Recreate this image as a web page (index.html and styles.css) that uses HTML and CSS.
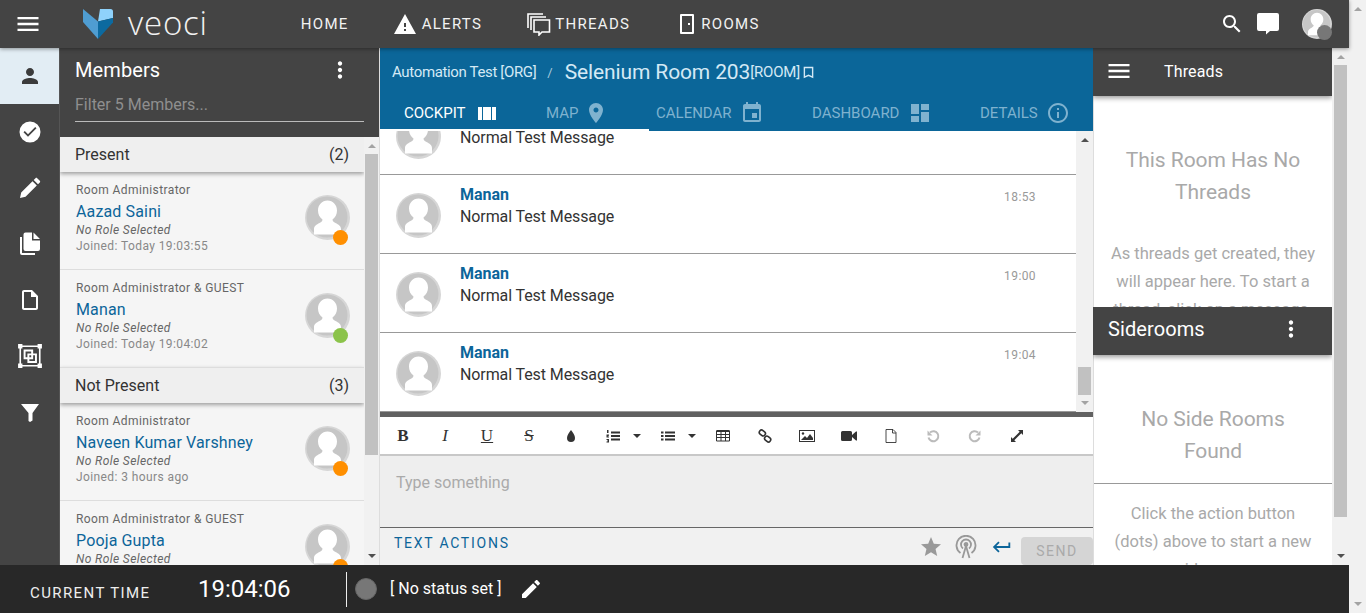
FILE: index.html
```html
<!DOCTYPE html>
<html lang="en">
<head>
  <meta charset="UTF-8" />
  <meta name="viewport" content="width=device-width, initial-scale=1.0" />
  <title>Veoci</title>
  <link rel="stylesheet" href="styles.css">
</head>
<body>
  <svg class="defs" width="0" height="0">
    <symbol id="avatar" viewBox="0 0 45 45">
      <circle cx="22.5" cy="22.5" r="22.5" fill="#d6d6d6"/>
      <circle cx="22" cy="22" r="20.5" fill="#c6c6c6"/>
      <path d="M22.5 5.500c5.500 0 9.500 4.500 9.500 10 0 4-1.700 7-4.500 9 0 1.500 1 2.500 3 3.500 3 1.500 5.500 3 5.500 6v5.500H9V34c0-3 2.500-4.500 5.500-6 2-1 3-2 3-3.500-2.800-2-4.500-5-4.500-9 0-5.500 4-10 9.500-10z" fill="#fff"/>
    </symbol>
    <symbol id="dots" viewBox="0 0 24 24">
      <path d="M12 8c1.100 0 2-.9 2-2s-.9-2-2-2-2 .9-2 2 .9 2 2 2zm0 2c-1.100 0-2 .9-2 2s.9 2 2 2 2-.9 2-2-.9-2-2-2zm0 6c-1.100 0-2 .9-2 2s.9 2 2 2 2-.9 2-2-.9-2-2-2z"/>
    </symbol>
    <symbol id="menu" viewBox="0 0 24 24">
      <path d="M3 18h18v-2H3v2zm0-5h18v-2H3v2zm0-7v2h18V6H3z"/>
    </symbol>
  </svg>

  <div class="app">
    <header class="topbar">
      <svg class="icon burger"><use href="#menu"/></svg>
      <div class="logo">
        <svg width="30" height="30" viewBox="0 0 30 30">
          <path d="M0 0l15 12.500V30L0 13z" fill="#4f9dd2"/>
          <path d="M17 0h10.500Q30 0 30 2.500V9L15 12.500 17 0z" fill="#8fd2fb"/>
          <path d="M15 12.500L30 9v4.500L15 30z" fill="#0c6aa0"/>
        </svg>
        <span class="logo-text">veoci</span>
      </div>
      <nav class="topnav">
        <a class="nav-home">HOME</a>
        <a class="nav-alerts"><svg width="24" height="24" viewBox="0 0 24 24"><path d="M1 22h22L12 2 1 22zm12-3h-2v-2h2v2zm0-4h-2v-4h2v4z"/></svg>ALERTS</a>
        <a class="nav-threads">
          <svg width="25" height="24" viewBox="0 0 25 24" fill="none" stroke="#fff" stroke-width="1.600">
            <path d="M17 2H2v14"/><path d="M20 5H5v13"/>
            <path d="M8 8h15.500v12H16l-3 3v-3H8z" fill="#444"/>
          </svg>THREADS</a>
        <a class="nav-rooms"><svg width="14" height="20" viewBox="0 0 14 20"><path d="M1 0h12a1 1 0 011 1v18a1 1 0 01-1 1H1a1 1 0 01-1-1V1a1 1 0 011-1zm1 2v16h10V2zm6 7h2v2H8z" fill-rule="evenodd"/></svg>ROOMS</a>
      </nav>
      <div class="top-right">
        <svg class="icon search" viewBox="0 0 24 24"><path d="M15.500 14h-.79l-.28-.27C15.410 12.590 16 11.110 16 9.500 16 5.910 13.090 3 9.500 3S3 5.910 3 9.500 5.910 16 9.500 16c1.610 0 3.090-.59 4.230-1.570l.27.280v.79l5 4.990L20.490 19l-4.990-5zm-6 0C7.010 14 5 11.990 5 9.500S7.010 5 9.500 5 14 7.010 14 9.500 11.990 14 9.500 14z"/></svg>
        <svg class="chat" width="22" height="22" viewBox="0 0 22 22"><path d="M2 0h18a2 2 0 012 2v14a2 2 0 01-2 2h-7l-4 3.500V18H2a2 2 0 01-2-2V2a2 2 0 012-2z"/></svg>
        <div class="user-pic">
          <svg width="30" height="30"><use href="#avatar"/></svg>
          <span class="badge badge-me"></span>
        </div>
      </div>
    </header>

    <div class="workspace">
      <aside class="rail">
        <a class="rail-item active"><svg viewBox="0 0 24 24"><path d="M12 12c2.210 0 4-1.790 4-4s-1.790-4-4-4-4 1.790-4 4 1.790 4 4 4zm0 2c-2.670 0-8 1.340-8 4v2h16v-2c0-2.660-5.330-4-8-4z"/></svg></a>
        <a class="rail-item"><svg viewBox="0 0 24 24"><path d="M12 1.500a10.500 10.500 0 100 21 10.500 10.500 0 000-21zm-2 15.300l-4.500-4.500 1.300-1.300 3.200 3.200 7.200-7.200 1.300 1.300z" fill-rule="evenodd"/></svg></a>
        <a class="rail-item"><svg viewBox="0 0 24 24"><path d="M2 22l1.200-5.500L14.500 5.200l4.300 4.300L7.500 20.800zM15.700 4l1.800-1.800c.5-.5 1.200-.5 1.700 0l2.600 2.600c.5.5.5 1.200 0 1.700L20 8.300z"/></svg></a>
        <a class="rail-item"><svg viewBox="0 0 24 24"><path d="M14 .5H7.500a2 2 0 00-2 2V17a2 2 0 002 2H20a2 2 0 002-2V8.500h-8zM15.500.5v6.500H22zM2 5v16a2 2 0 002 2h13v-2H4V5z"/></svg></a>
        <a class="rail-item"><svg viewBox="0 0 24 24"><path d="M14 2H6c-1.100 0-2 .9-2 2v16c0 1.100.9 2 2 2h12c1.100 0 2-.9 2-2V8l-6-6zm4 18H6V4h7v5h5v11z"/></svg></a>
        <a class="rail-item"><svg class="rail-frame" viewBox="0 0 24 24" stroke="#fff" stroke-width="1.800"><path d="M3 3h18v18H3z" stroke-width="1.500"/><path d="M1 1h4v4H1zM19 1h4v4h-4zM1 19h4v4H1zM19 19h4v4h-4z" fill="#fff" stroke="none"/><path d="M7 7h7v7H7z"/><path d="M10.500 10.500h7v7h-7z"/></svg></a>
        <a class="rail-item"><svg viewBox="0 0 24 24"><path d="M3 4h18l-6.500 9v7.500L12 22l-1.500-1v-8z"/></svg></a>
      </aside>

      <section class="members">
        <div class="members-head">
          <div class="members-title">
            <h2>Members</h2>
            <svg class="more"><use href="#dots"/></svg>
          </div>
          <div class="filter">Filter 5 Members...</div>
        </div>
        <div class="members-body">
          <div class="members-list">
            <div class="group-head first"><span>Present</span><span>(2)</span></div>
            <div class="member">
              <div class="member-info">
                <div class="role">Room Administrator</div>
                <a class="name">Aazad Saini</a>
                <div class="subrole">No Role Selected</div>
                <div class="joined">Joined: Today 19:03:55</div>
              </div>
              <div class="member-pic"><svg width="45" height="45"><use href="#avatar"/></svg><span class="badge away"></span></div>
            </div>
            <div class="member last">
              <div class="member-info">
                <div class="role">Room Administrator &amp; GUEST</div>
                <a class="name">Manan</a>
                <div class="subrole">No Role Selected</div>
                <div class="joined">Joined: Today 19:04:02</div>
              </div>
              <div class="member-pic"><svg width="45" height="45"><use href="#avatar"/></svg><span class="badge online"></span></div>
            </div>
            <div class="group-head"><span>Not Present</span><span>(3)</span></div>
            <div class="member">
              <div class="member-info">
                <div class="role">Room Administrator</div>
                <a class="name">Naveen Kumar Varshney</a>
                <div class="subrole">No Role Selected</div>
                <div class="joined">Joined: 3 hours ago</div>
              </div>
              <div class="member-pic"><svg width="45" height="45"><use href="#avatar"/></svg><span class="badge away"></span></div>
            </div>
            <div class="member">
              <div class="member-info">
                <div class="role">Room Administrator &amp; GUEST</div>
                <a class="name">Pooja Gupta</a>
                <div class="subrole">No Role Selected</div>
                <div class="joined">Joined: 2 hours ago</div>
              </div>
              <div class="member-pic"><svg width="45" height="45"><use href="#avatar"/></svg><span class="badge away"></span></div>
            </div>
          </div>
          <div class="scroll scroll-members">
            <span class="arrow up"></span>
            <div class="track"><div class="thumb"></div></div>
            <span class="arrow down dark"></span>
          </div>
        </div>
      </section>

      <main class="room">
        <div class="room-head">
          <div class="crumbs">
            <span class="org">Automation Test [ORG]</span>
            <span class="slash">/</span>
            <span class="room-name">Selenium Room 203</span>
            <span class="room-tag">[ROOM]</span>
            <svg class="bookmark" width="11" height="13" viewBox="0 0 12 13" fill="none" stroke="#d4e9f5" stroke-width="1.500"><path d="M1.500 1h9v10.500L6 9.500l-4.500 2z"/></svg>
          </div>
          <div class="tabs">
            <a class="tab tab-cockpit on">COCKPIT
              <svg width="18" height="13" viewBox="0 0 18 13"><path d="M0 0h4v13H0zM5 0h8v13H5zM14 0h4v13h-4z"/></svg>
            </a>
            <a class="tab tab-map">MAP
              <svg width="24" height="24" viewBox="0 0 24 24"><path d="M12 2C8.130 2 5 5.130 5 9c0 5.250 7 13 7 13s7-7.750 7-13c0-3.870-3.130-7-7-7zm0 9.500c-1.380 0-2.500-1.120-2.500-2.500s1.120-2.500 2.500-2.500 2.500 1.120 2.500 2.500-1.120 2.500-2.500 2.500z"/></svg>
            </a>
            <a class="tab tab-calendar">CALENDAR
              <svg width="24" height="24" viewBox="0 0 24 24"><path d="M17 12h-5v5h5v-5zM16 1v2H8V1H6v2H5c-1.110 0-1.990.9-1.990 2L3 19c0 1.100.89 2 2 2h14c1.100 0 2-.9 2-2V5c0-1.100-.9-2-2-2h-1V1h-2zm3 18H5V8h14v11z"/></svg>
            </a>
            <a class="tab tab-dash">DASHBOARD
              <svg width="24" height="24" viewBox="0 0 24 24"><path d="M3 13h8V3H3v10zm0 8h8v-6H3v6zm10 0h8V11h-8v10zm0-18v6h8V3h-8z"/></svg>
            </a>
            <a class="tab tab-details">DETAILS
              <svg width="24" height="24" viewBox="0 0 24 24"><path d="M11 7h2v2h-2zm0 4h2v6h-2zm1-9C6.480 2 2 6.480 2 12s4.480 10 10 10 10-4.480 10-10S17.520 2 12 2zm0 18c-4.410 0-8-3.590-8-8s3.590-8 8-8 8 3.590 8 8-3.590 8-8 8z"/></svg>
            </a>
          </div>
        </div>

        <div class="chat-area">
          <div class="messages">
            <div class="msg">
              <svg width="45" height="45"><use href="#avatar"/></svg>
              <div class="msg-body">
                <div class="msg-top"><a class="msg-author">Manan</a><span class="msg-time">18:50</span></div>
                <div class="msg-text">Normal Test Message</div>
              </div>
            </div>
            <div class="msg">
              <svg width="45" height="45"><use href="#avatar"/></svg>
              <div class="msg-body">
                <div class="msg-top"><a class="msg-author">Manan</a><span class="msg-time">18:53</span></div>
                <div class="msg-text">Normal Test Message</div>
              </div>
            </div>
            <div class="msg">
              <svg width="45" height="45"><use href="#avatar"/></svg>
              <div class="msg-body">
                <div class="msg-top"><a class="msg-author">Manan</a><span class="msg-time">19:00</span></div>
                <div class="msg-text">Normal Test Message</div>
              </div>
            </div>
            <div class="msg">
              <svg width="45" height="45"><use href="#avatar"/></svg>
              <div class="msg-body">
                <div class="msg-top"><a class="msg-author">Manan</a><span class="msg-time">19:04</span></div>
                <div class="msg-text">Normal Test Message</div>
              </div>
            </div>
          </div>
          <div class="scroll scroll-msgs">
            <span class="arrow up dark"></span>
            <div class="track"><div class="thumb"></div></div>
            <span class="arrow down"></span>
          </div>
        </div>

        <div class="editor">
          <div class="toolbar">
            <span class="tool t-b">B</span>
            <span class="tool t-i">I</span>
            <span class="tool t-u">U</span>
            <span class="tool t-s">S</span>
            <svg class="tool" viewBox="0 0 14 14"><path d="M7 1c2 3 4 5 4 8a4 4 0 01-8 0c0-3 2-5 4-8z"/></svg>
            <svg class="tool t-list" viewBox="0 0 14 14"><path d="M5 2.500h9v2H5zM5 6h9v2H5zM5 9.500h9v2H5z"/><path d="M1 1h1.500v3H1zM.5 5.500h2.500v1l-1.500 1h1.500v1H.5zM.5 10h2.500v3.500H.5v-1h1.500v-.2H1v-.8h1V11H.5z"/></svg>
            <span class="caret"></span>
            <svg class="tool t-list" viewBox="0 0 14 14"><path d="M4 2.500h10v2H4zM4 6h10v2H4zM4 9.500h10v2H4z"/><path d="M0 2.500h2.500v2H0zM0 6h2.500v2H0zM0 9.500h2.500v2H0z"/></svg>
            <span class="caret"></span>
            <svg class="tool t-line" viewBox="0 0 14 14" stroke="#333" stroke-width="1"><path d="M.5 2h13v10H.5z"/><path d="M.5 5.500h13M.5 8.500h13M5 2v10M9.500 2v10"/><path d="M.5 2h13" stroke-width="2"/></svg>
            <svg class="tool t-line" viewBox="0 0 14 14" stroke="#333" stroke-width="1.600"><rect x="1" y="1.500" width="6.500" height="4.500" rx="2.200" transform="rotate(40 4 4)"/><rect x="6.500" y="8" width="6.500" height="4.500" rx="2.200" transform="rotate(40 10 10)"/></svg>
            <svg class="tool t-wide" viewBox="0 0 16 14"><path d="M0 1h16v12H0zm1 1v10h14V2z" fill-rule="evenodd"/><path d="M2 11l4-4 2 2 3-4 3 4v2z"/><circle cx="4" cy="4.500" r="1.200"/></svg>
            <svg class="tool t-wide" viewBox="0 0 16 14"><path d="M1.500 2h8A1.500 1.500 0 0111 3.500V6l4-3.500h1v9h-1L11 8v2.500A1.500 1.500 0 019.500 12h-8A1.500 1.500 0 010 10.500v-7A1.500 1.500 0 011.500 2z"/></svg>
            <svg class="tool t-line" viewBox="0 0 14 14" stroke="#333" stroke-width=".9"><path d="M2 .5h7l3 3v10H2z"/><path d="M8.500.5v3.500H12"/></svg>
            <svg class="tool t-line" viewBox="0 0 14 14" stroke="#bbb" stroke-width="2"><path d="M4 3.500a5 5 0 11-1.500 5"/><path d="M1.500 1.500v5h5z" fill="#bbb" stroke="none"/></svg>
            <svg class="tool t-line" viewBox="0 0 14 14" stroke="#bbb" stroke-width="2"><path d="M10 3.500a5 5 0 101.500 5"/><path d="M12.500 1.500v5h-5z" fill="#bbb" stroke="none"/></svg>
            <svg class="tool" viewBox="0 0 14 14"><path d="M8 1h5v5l-1.700-1.700L4.300 11.300 6 13H1V8l1.700 1.700 7-7z"/></svg>
          </div>
          <div class="editor-text">Type something</div>
          <div class="editor-foot">
            <a class="text-actions">TEXT ACTIONS</a>
            <div class="foot-actions">
              <svg class="star" width="24" height="24" viewBox="0 0 24 24"><path d="M12 17.270L18.180 21l-1.640-7.030L22 9.240l-7.190-.61L12 2 9.190 8.630 2 9.240l5.460 4.730L5.820 21z"/></svg>
              <svg class="cast" width="22" height="24" viewBox="0 0 22 24" fill="none" stroke="#999" stroke-width="1.800"><path d="M5.500 18a9.500 9.500 0 1111 0"/><path d="M8 13.500a5 5 0 116 0"/><circle cx="11" cy="9.500" r="1.500" fill="#999"/><path d="M11 11l-3.500 12M11 11l3.500 12"/></svg>
              <svg class="enter" width="22" height="22" viewBox="0 0 24 24"><path d="M21 7v6H5.830l3.580 3.590L8 18l-6-6 6-6 1.410 1.410L5.830 11H19V7z"/></svg>
              <button class="send">SEND</button>
            </div>
          </div>
        </div>
      </main>

      <aside class="side">
        <div class="side-panes">
          <div class="pane-threads">
            <div class="threads-head">
              <svg class="icon"><use href="#menu"/></svg>
              <span>Threads</span>
            </div>
            <div class="threads-body">
              <h3>This Room Has No Threads</h3>
              <p>As threads get created, they will appear here. To start a thread, click on a message.</p>
            </div>
          </div>
          <div class="pane-rooms">
            <div class="rooms-head">
              <span>Siderooms</span>
              <svg class="more"><use href="#dots"/></svg>
            </div>
            <div class="rooms-body">
              <h3>No Side Rooms Found</h3>
              <p>Click the action button (dots) above to start a new sideroom.</p>
            </div>
          </div>
        </div>
        <div class="scroll scroll-side">
          <span class="arrow up"></span>
          <div class="track"><div class="thumb"></div></div>
          <span class="arrow down dark"></span>
        </div>
      </aside>
    </div>

    <footer class="statusbar">
      <span class="time-label">CURRENT TIME</span>
      <span class="time">19:04:06</span>
      <span class="divider"></span>
      <span class="status-dot"></span>
      <span class="status-text">[ No status set ]</span>
      <svg class="status-edit" width="24" height="24" viewBox="0 0 24 24"><path d="M3 17.250V21h3.750L17.810 9.940l-3.750-3.750L3 17.250zM20.710 7.040c.39-.39.39-1.020 0-1.410l-2.340-2.340c-.39-.39-1.020-.39-1.410 0l-1.830 1.830 3.750 3.750 1.830-1.830z"/></svg>
    </footer>
  </div>

  <div class="page-scroll">
    <span class="arrow up"></span>
    <span class="arrow down"></span>
  </div>
</body>
</html>
```

FILE: styles.css
```css
* { box-sizing: border-box; margin: 0; padding: 0; }
html, body { height: 100%; overflow: hidden; }
body { font-family: Roboto, "Liberation Sans", sans-serif; background: #f1f1f1; display: flex; color: #333; }
a { color: inherit; text-decoration: none; }
.defs { position: absolute; }
svg { flex-shrink: 0; }
.icon { width: 28px; height: 28px; fill: #fff; }

.app { width: 1349px; height: 613px; display: flex; flex-direction: column; flex-shrink: 0; }
.page-scroll { flex: 1; display: flex; flex-direction: column; justify-content: space-between; align-items: center; padding: 7px 0 7px; }

/* top bar */
.topbar { height: 48px; background: #444; color: #fff; display: flex; align-items: center; flex-shrink: 0; padding-left: 14px; box-shadow: 0 1px 4px rgba(0,0,0,.4); position: relative; z-index: 3; }
.logo { display: flex; align-items: center; margin-left: 41px; gap: 15px; }
.logo-text { font-family: "Open Sans", sans-serif; font-weight: 300; font-size: 33px; line-height: 48px; letter-spacing: .8px; margin-top: -3px; color: #f2f2f2; }
.topnav { display: flex; align-items: center; font-size: 15px; letter-spacing: 1.300px; margin-left: 93px; color: #f2f2f2; }
.topnav a { display: flex; align-items: center; }
.nav-alerts svg, .nav-rooms svg { fill: #fff; }
.nav-alerts { margin-left: 44px; gap: 5px; }
.nav-threads { margin-left: 44px; gap: 4px; }
.nav-rooms { margin-left: 50px; gap: 7px; }
.top-right { margin-left: auto; display: flex; align-items: center; padding-right: 17px; }
.search { width: 24px; height: 24px; }
.chat { margin-left: 13px; fill: #fff; }
.user-pic { position: relative; margin-left: 23px; height: 30px; width: 30px; }
.badge { position: absolute; border-radius: 50%; }
.badge-me { width: 15px; height: 15px; right: 0; bottom: -1px; background: #777; }

/* left rail */
.workspace { flex: 1; display: flex; min-height: 0; }
.rail { width: 60px; background: #444; border-right: 1px solid #555; display: flex; flex-direction: column; flex-shrink: 0; }
.rail-item { height: 56px; display: flex; align-items: center; justify-content: center; }
.rail-item svg { width: 24px; height: 24px; fill: #fff; }
.rail-item svg.rail-frame { width: 26px; height: 26px; fill: none; }
.rail-item.active { background: #e2edf4; }
.rail-item.active svg { fill: #3b3b3b; }

/* members */
.members { width: 320px; display: flex; flex-direction: column; flex-shrink: 0; background: #f5f5f5; border-right: 1px solid #ddd; }
.members-head { height: 89px; background: #444; color: #fff; padding: 0 15px; flex-shrink: 0; }
.members-title { display: flex; align-items: center; justify-content: space-between; height: 44px; }
.members-title h2 { font-size: 20px; font-weight: 400; letter-spacing: .1px; }
.more { width: 26px; height: 26px; fill: #fff; }
.members-title .more { margin-right: 11px; }
.filter { font-size: 16px; line-height: 26px; color: #8f8f8f; height: 30px; border-bottom: 1px solid #bbb; }
.members-body { flex: 1; display: flex; min-height: 0; }
.members-list { flex: 1; overflow: hidden; min-width: 0; }
.group-head { height: 36px; background: #efefef; border-top: 1px solid #ddd; display: flex; align-items: center; justify-content: space-between; padding: 0 15px; font-size: 16px; box-shadow: 0 2px 4px rgba(0,0,0,.35); position: relative; }
.group-head.first { height: 35px; border-top: 0; }
.member { height: 98px; border-bottom: 1px solid #ddd; display: flex; justify-content: space-between; padding: 11px 14px 0 16px; }
.member.last { border-bottom: 0; height: 97px; }
.role { font-size: 12px; line-height: 15px; color: #666; letter-spacing: .4px; }
.name { display: block; font-size: 16px; line-height: 20px; margin-top: 4px; color: #0c659a; letter-spacing: .14px; }
.subrole { font-size: 12px; line-height: 16px; font-style: italic; color: #666; letter-spacing: .4px; }
.joined { font-size: 12px; line-height: 16px; color: #888; letter-spacing: .4px; }
.member-pic { position: relative; width: 45px; height: 45px; margin-top: 12px; }
.member-pic .badge { width: 15px; height: 15px; right: 2px; bottom: -5px; }
.away { background: #ff8f00; }
.online { background: #8bc34a; }

/* fake scrollbars */
.scroll { width: 17px; background: #f1f1f1; display: flex; flex-direction: column; align-items: center; flex-shrink: 0; }
.arrow { width: 0; height: 0; border-left: 4px solid transparent; border-right: 4px solid transparent; }
.arrow.up { border-bottom: 4px solid #a3a3a3; margin: 7px 0 6px; }
.arrow.down { border-top: 4px solid #a3a3a3; margin: 6px 0 7px; }
.arrow.up.dark { border-bottom-color: #505050; }
.arrow.down.dark { border-top-color: #505050; }
.page-scroll .arrow { margin: 0; }
.track { flex: 1; width: 13px; }
.thumb { background: #c1c1c1; }
.scroll-members { width: 15px; }
.scroll-members .thumb { height: 301px; }
.scroll-msgs .track { display: flex; align-items: flex-end; }
.scroll-msgs .thumb { width: 13px; height: 28px; }
.scroll-side .thumb { height: 452px; }

/* room */
.room { width: 713px; display: flex; flex-direction: column; flex-shrink: 0; background: #fff; }
.room-head { height: 83px; background: #0b6699; color: #fff; flex-shrink: 0; position: relative; }
.crumbs { display: flex; align-items: center; height: 50px; padding: 0 0 2px 12px; color: #d4e9f5; }
.org { font-size: 15px; letter-spacing: -.35px; }
.slash { font-size: 13px; margin: 0 12px 0 11px; color: #a9cadd; }
.room-name { font-size: 21px; letter-spacing: -.13px; }
.room-tag { font-size: 15px; letter-spacing: -.2px; }
.bookmark { margin-left: 3px; }
.tabs { display: flex; height: 33px; font-size: 15px; color: #7fb2cf; }
.tab { display: flex; align-items: center; gap: 8px; height: 33px; padding-bottom: 3px; }
.tab svg { fill: #7fb2cf; }
.tab.on { color: #fff; border-bottom: 2px solid #fff; padding-bottom: 1px; }
.tab.on svg { fill: #fff; }
.tab-cockpit { width: 269px; padding-left: 24px; gap: 12px; }
.tab-map { margin-left: -103px; width: 110px; gap: 6px; }
.tab-calendar { width: 156px; }
.tab-dash { width: 168px; gap: 9px; }

.chat-area { height: 281px; display: flex; flex-shrink: 0; }
.messages { flex: 1; min-width: 0; overflow: hidden; display: flex; flex-direction: column; justify-content: flex-end; }
.msg { height: 79px; flex-shrink: 0; border-bottom: 1px solid #999; display: flex; align-items: flex-start; padding: 18px 40px 0 16px; }
.msg-body { flex: 1; margin-left: 19px; margin-top: -9px; }
.msg-top { display: flex; justify-content: space-between; align-items: center; }
.msg-author { font-size: 16px; font-weight: 700; color: #0c659a; line-height: 22px; }
.msg-time { font-size: 12px; color: #999; letter-spacing: .4px; padding-top: 4px; }
.msg-text { font-size: 16px; line-height: 22px; color: #333; letter-spacing: -.1px; }

/* editor */
.editor { flex: 1; display: flex; flex-direction: column; min-height: 0; border-top: 5px solid #616161; }
.toolbar { height: 39px; display: flex; align-items: center; padding-left: 16px; border-bottom: 2px solid #c8c8c8; flex-shrink: 0; }
.tool { width: 14px; height: 14px; margin-right: 28px; fill: #333; flex-shrink: 0; }
span.tool { font-family: "Liberation Serif", serif; font-size: 17px; line-height: 14px; text-align: center; color: #333; }
.t-b { font-weight: 700; }
.t-i { font-style: italic; }
.t-u { text-decoration: underline; }
.t-s { text-decoration: line-through; }
.t-list { margin-right: 13px; }
.caret { width: 0; height: 0; border-left: 4px solid transparent; border-right: 4px solid transparent; border-top: 4px solid #333; margin-right: 20px; }
.t-line { fill: none; }
.t-wide { width: 16px; margin-left: -1px; margin-right: 27px; }
.editor-text { height: 72px; background: #eee; border-bottom: 1px solid #666; padding: 16px; font-size: 16px; line-height: 22px; color: #aaa; flex-shrink: 0; }
.editor-foot { flex: 1; background: #f1f1f1; display: flex; justify-content: space-between; padding-left: 14px; min-height: 0; }
.text-actions { font-size: 14px; letter-spacing: 1.750px; color: #0c659a; margin-top: 7px; }
.foot-actions { display: flex; align-items: flex-start; padding-top: 7px; }
.star { fill: #999; }
.cast { margin-left: 12px; }
.enter { fill: #0c659a; margin-left: 14px; margin-top: 1px; }
.send { width: 72px; height: 28px; margin: 2px 0 0 8px; border: 0; border-radius: 4px; background: #d5d5d5; color: #aaa; font: 14px Roboto, sans-serif; letter-spacing: 1.500px; }

/* right side */
.side { flex: 1; display: flex; min-width: 0; }
.side-panes { flex: 1; display: flex; flex-direction: column; min-width: 0; background: #fff; }
.scroll-side { width: 17px; }
.pane-threads { height: 259px; overflow: hidden; flex-shrink: 0; }
.threads-head { height: 48px; background: #444; color: #fff; display: flex; align-items: center; padding: 0 0 2px 12px; font-size: 16px; letter-spacing: .15px; gap: 31px; box-shadow: 0 2px 5px rgba(0,0,0,.4); position: relative; }
.threads-body { height: 211px; padding: 48px 14px 0; text-align: center; border-left: 1px solid #ddd; }
.side h3 { font-size: 21px; line-height: 32px; font-weight: 400; color: #a9a9a9; letter-spacing: -.05px; }
.side p { font-size: 16.500px; line-height: 28px; color: #a9a9a9; }
.threads-body p { margin-top: 32px; }
.pane-rooms { flex: 1; min-height: 0; overflow: hidden; }
.rooms-head { height: 48px; background: #444; color: #fff; display: flex; align-items: center; justify-content: space-between; padding: 0 28px 4px 15px; font-size: 20px; box-shadow: 0 2px 5px rgba(0,0,0,.4); position: relative; letter-spacing: .1px; }
.rooms-body { height: 210px; text-align: center; padding-top: 48px; border-left: 1px solid #ddd; }
.rooms-body h3 { padding: 0 30px 16px; border-bottom: 1px solid #999; }
.rooms-body p { padding: 16px 20px 0; }

/* footer */
.statusbar { height: 48px; background: #282828; color: #fff; display: flex; align-items: center; flex-shrink: 0; padding-left: 30px; position: relative; z-index: 2; }
.time-label { font-size: 15px; letter-spacing: 1.400px; width: 168px; color: #eee; margin-top: 8px; }
.time { font-size: 24px; width: 148px; }
.divider { width: 1px; height: 35px; background: #eee; }
.status-dot { width: 22px; height: 22px; border-radius: 50%; background: #777; border: 1px solid #666; margin-left: 8px; }
.status-text { font-size: 16px; margin-left: 13px; margin-top: -2px; }
.status-edit { fill: #fff; margin-left: 18px; }
```
